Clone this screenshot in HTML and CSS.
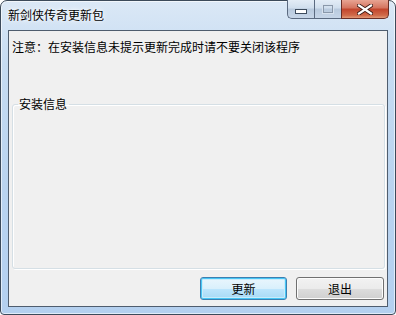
FILE: index.html
```html
<!DOCTYPE html>
<html>
<head>
<meta charset="utf-8">
<link rel="stylesheet" href="styles.css">
</head>
<body>
<div class="window">
  <div class="titlebar">
    <span class="title">新剑侠传奇更新包</span>
    <div class="controls">
      <div class="cbtn min"><span class="min-glyph"></span></div>
      <div class="cbtn max"><span class="max-glyph"></span></div>
      <div class="cbtn close">
        <svg width="16" height="11" viewBox="0 0 16 11"><path d="M2 1.5 L14 9.5 M14 1.5 L2 9.5" stroke="#3a1a14" stroke-width="4" stroke-linecap="square"/><path d="M2 1.5 L14 9.5 M14 1.5 L2 9.5" stroke="#fff" stroke-width="2.2" stroke-linecap="square"/></svg>
      </div>
    </div>
  </div>
  <div class="client">
    <p class="notice">注意：在安装信息未提示更新完成时请不要关闭该程序</p>
    <fieldset class="group"><legend class="group-label">安装信息</legend></fieldset>
    <div class="buttons">
      <button class="btn default">更新</button>
      <button class="btn">退出</button>
    </div>
  </div>
</div>
</body>
</html>
```
FILE: styles.css
```css
html, body { margin: 0; padding: 0; background: #fff; }
body { font-family: "Noto Sans CJK SC", "Noto Sans", sans-serif; font-size: 12px; }
.window {
  width: 396px; height: 315px; box-sizing: border-box;
  border: 1px solid #3c4a5a; border-radius: 7px 7px 4px 4px;
  background: linear-gradient(180deg, #dbe8f6 0%, #c6dcf2 20%, #b9d3ef 60%, #b4d0ef 100%);
  padding: 0 7px 7px 7px;
  display: flex; flex-direction: column;
  box-shadow: inset 0 0 0 1px rgba(255,255,255,0.6);
}
.titlebar { height: 29px; display: flex; align-items: flex-start; justify-content: space-between; }
.title { margin-top: 6px; font-size: 12px; line-height: 16px; color: #000; text-shadow: 0 0 6px #fff, 0 0 3px #fff; }
.controls { display: flex; margin-right: -1px; margin-top: -1px; }
.cbtn { height: 19px; box-sizing: border-box; border: 1px solid #5b6a80; border-top: none; display: flex; align-items: center; justify-content: center; }
.min { width: 27px; border-radius: 0 0 0 5px; background: linear-gradient(180deg, #e3ecf6 0%, #d0deed 45%, #b8c9dd 50%, #c7d6e8 100%); border-right: none; }
.max { width: 27px; background: linear-gradient(180deg, #e3ecf6 0%, #d0deed 45%, #b8c9dd 50%, #c7d6e8 100%); border-right: none; }
.close { width: 48px; border-radius: 0 0 5px 0; background: linear-gradient(180deg, #e8a493 0%, #d4735e 45%, #c2442c 50%, #d06a4a 85%, #e29a78 100%); border-color: #6a2e26; }
.min-glyph { width: 10px; height: 3px; background: #fff; border: 1px solid #3d4b5d; margin-top: 4px; }
.max-glyph { width: 8px; height: 6px; border: 1px solid #8a98aa; outline: 1px solid #d8e2ee; background: transparent; }
.client {
  flex: 1; border: 1px solid #4f5d6e; background: #f0f0f0;
  display: flex; flex-direction: column; padding: 0 2px 0 3px;
}
.notice { margin: 8px 0 0 0; line-height: 16px; color: #000; }
.group {
  margin: 41px 0 0 0; padding: 0; height: 173px; box-sizing: border-box;
  border: 1px solid #d5dfe5; border-radius: 3px;
  box-shadow: 1px 1px 0 #fff inset, 1px 1px 0 #fff;
}
.group-label { margin-left: 5px; padding: 0 2px 0 1px; line-height: 16px; color: #000; }
.buttons { display: flex; justify-content: flex-end; gap: 9px; margin-top: 8px; padding-right: 1px; }
.btn {
  height: 23px; width: 88px; box-sizing: border-box; padding: 0;
  font-family: "Noto Sans CJK SC", sans-serif; font-size: 12px; color: #000;
  border: 1px solid #707070; border-radius: 3px;
  background: linear-gradient(180deg, #f2f2f2 0%, #ebebeb 50%, #dddddd 51%, #cfcfcf 100%);
  box-shadow: inset 0 0 0 1px #fcfcfc;
}
.btn.default {
  width: 87px; border-color: #3c7fb1;
  background: linear-gradient(180deg, #eaf6fd 0%, #d9f0fc 50%, #bee6fd 51%, #a7d9f5 100%);
  box-shadow: inset 0 0 0 1px #48c6f5, inset 0 0 0 2px #c9ecfb;
}
```
